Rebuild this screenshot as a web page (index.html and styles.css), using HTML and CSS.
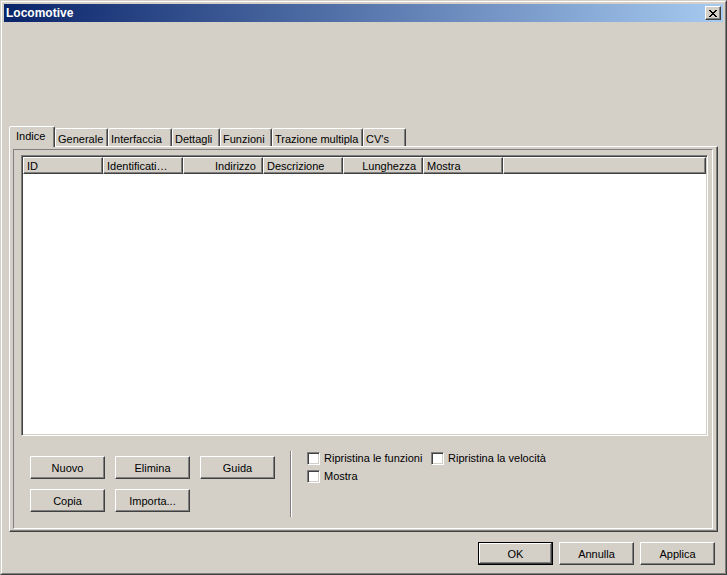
FILE: index.html
```
<!DOCTYPE html>
<html>
<head>
<meta charset="utf-8">
<title>Locomotive</title>
<link rel="stylesheet" href="styles.css">
</head>
<body>
<div class="window">
  <div class="frame">
    <div class="titlebar">
      <span class="title">Locomotive</span>
      <span class="close"><svg width="8" height="7" viewBox="0 0 8 7" shape-rendering="crispEdges"><path d="M0 0h2v1h-2z M6 0h2v1h-2z M1 1h2v1h-2z M5 1h2v1h-2z M2 2h4v1h-4z M3 3h2v1h-2z M2 4h4v1h-4z M1 5h2v1h-2z M5 5h2v1h-2z M0 6h2v1h-2z M6 6h2v1h-2z" fill="#000"/></svg></span>
    </div>
    <div class="client">
      <div class="tabs">
        <div class="tab active w-indice">Indice</div>
        <div class="tab w-generale">Generale</div>
        <div class="tab w-interfaccia">Interfaccia</div>
        <div class="tab w-dettagli">Dettagli</div>
        <div class="tab w-funzioni">Funzioni</div>
        <div class="tab w-trazione">Trazione multipla</div>
        <div class="tab w-cvs">CV's</div>
      </div>
      <div class="panel">
        <div class="group">
          <div class="listview">
            <div class="lv-header">
              <div class="col">ID</div>
              <div class="col">Identificati…</div>
              <div class="col right">Indirizzo</div>
              <div class="col">Descrizione</div>
              <div class="col right">Lunghezza</div>
              <div class="col">Mostra</div>
              <div class="col filler"></div>
            </div>
          </div>
          <div class="controls">
            <div class="btn-grid">
              <button class="btn">Nuovo</button>
              <button class="btn">Elimina</button>
              <button class="btn">Guida</button>
              <button class="btn">Copia</button>
              <button class="btn">Importa...</button>
            </div>
            <div class="vsep"></div>
            <div class="checks">
              <div class="check-row">
                <label class="check check-first"><span class="box"></span><span class="check-label">Ripristina le funzioni</span></label>
                <label class="check"><span class="box"></span><span class="check-label">Ripristina la velocità</span></label>
              </div>
              <div class="check-row">
                <label class="check"><span class="box"></span><span class="check-label">Mostra</span></label>
              </div>
            </div>
          </div>
        </div>
      </div>
      <div class="footer">
        <button class="btn default">OK</button>
        <button class="btn">Annulla</button>
        <button class="btn">Applica</button>
      </div>
    </div>
  </div>
</div>
</body>
</html>
```
FILE: styles.css
```
* { box-sizing: border-box; }
html, body { margin: 0; padding: 0; }
body {
  width: 727px;
  height: 575px;
  overflow: hidden;
  background: #d4d0c8;
  font-family: "Liberation Sans", Arial, sans-serif;
  font-size: 11px;
  color: #000;
}
.window {
  width: 727px;
  height: 575px;
  border: 1px solid;
  border-color: #d4d0c8 #404040 #404040 #d4d0c8;
  background: #d4d0c8;
}
.frame {
  height: 100%;
  border: 1px solid;
  border-color: #fff #808080 #808080 #fff;
  padding: 2px;
  display: flex;
  flex-direction: column;
}
.titlebar {
  height: 18px;
  flex: none;
  background: linear-gradient(to right, #0a246a, #a6caf0);
  display: flex;
  align-items: center;
  justify-content: space-between;
  padding: 0 2px;
}
.title {
  color: #fff;
  font-weight: bold;
  font-size: 12px;
  line-height: 18px;
}
.close {
  width: 16px;
  height: 14px;
  background: #d4d0c8;
  border: 1px solid;
  border-color: #fff #404040 #404040 #fff;
  box-shadow: inset -1px -1px #808080;
  display: flex;
  align-items: center;
  justify-content: center;
  padding-right: 1px;
}
.close svg { display: block; }
.client {
  padding: 104px 5px 0 5px;
}
.tabs {
  display: flex;
  align-items: flex-end;
  height: 20px;
  position: relative;
  z-index: 1;
}
.tab {
  height: 18px;
  flex: none;
  border: 1px solid;
  border-bottom: none;
  border-color: #fff #404040 transparent #fff;
  box-shadow: inset -1px 0 #808080;
  border-radius: 2px 2px 0 0;
  padding: 3px 0 0 2px;
  line-height: 14px;
  white-space: nowrap;
  background: #d4d0c8;
}
.tab.active {
  height: 21px;
  margin-bottom: -1px;
  padding: 2px 0 0 6px;
}
.w-indice { width: 46px; }
.w-generale { width: 53px; }
.w-interfaccia { width: 64px; }
.w-dettagli { width: 48px; }
.w-funzioni { width: 52px; }
.w-trazione { width: 91px; }
.w-cvs { width: 43px; }
.panel {
  height: 386px;
  border-style: solid;
  border-width: 1px;
  border-color: #fff #404040 #404040 #fff;
  box-shadow: inset -1px -1px #808080;
  padding: 2px 4px 2px 3px;
}
.group {
  height: 100%;
  border: 1px solid;
  border-color: #808080 #fff #fff #808080;
  padding: 5px 4px 0 7px;
}
.listview {
  height: 281px;
  background: #fff;
  border: 1px solid;
  border-color: #808080 #fff #fff #808080;
  box-shadow: inset 1px 1px #404040, inset -1px -1px #d4d0c8;
  padding: 1px;
}
.lv-header {
  display: flex;
  height: 17px;
}
.col {
  width: 80px;
  flex: none;
  border: 1px solid;
  border-color: #fff #404040 #404040 #fff;
  box-shadow: inset -1px -1px #808080;
  padding: 1px 6px 0 3px;
  line-height: 14px;
  background: #d4d0c8;
  white-space: nowrap;
  overflow: hidden;
}
.col.right { text-align: right; }
.col.filler { flex: 1; width: auto; }
.controls {
  display: flex;
  margin-top: 15px;
  padding-left: 9px;
}
.btn-grid {
  display: grid;
  grid-template-columns: repeat(3, 75px);
  grid-auto-rows: 23px;
  column-gap: 10px;
  row-gap: 10px;
  margin-top: 5px;
  align-content: start;
}
.btn {
  appearance: none;
  width: 75px;
  height: 23px;
  margin: 0;
  padding: 0;
  font: inherit;
  color: #000;
  background: #d4d0c8;
  border: 1px solid;
  border-color: #fff #404040 #404040 #fff;
  box-shadow: inset -1px -1px #808080;
  display: flex;
  align-items: center;
  justify-content: center;
}
.btn.default {
  border-color: #000;
  box-shadow: inset -1px -1px #404040, inset 1px 1px #fff, inset -2px -2px #808080;
}
.vsep {
  width: 2px;
  height: 66px;
  margin-left: 15px;
  border-left: 1px solid #808080;
  border-right: 1px solid #fff;
}
.checks {
  display: flex;
  flex-direction: column;
  margin-left: 15px;
  padding-top: 1px;
}
.check-row {
  display: flex;
  height: 18px;
}
.check {
  display: flex;
  align-items: center;
  height: 13px;
}
.check-first { width: 124px; }
.box {
  width: 13px;
  height: 13px;
  flex: none;
  background: #fff;
  border: 1px solid;
  border-color: #808080 #fff #fff #808080;
  box-shadow: inset 1px 1px #404040, inset -1px -1px #d4d0c8;
  margin-right: 4px;
}
.check-label {
  line-height: 13px;
  white-space: nowrap;
}
.footer {
  display: flex;
  justify-content: flex-end;
  gap: 6px;
  margin-top: 10px;
  padding-right: 3px;
}
```
